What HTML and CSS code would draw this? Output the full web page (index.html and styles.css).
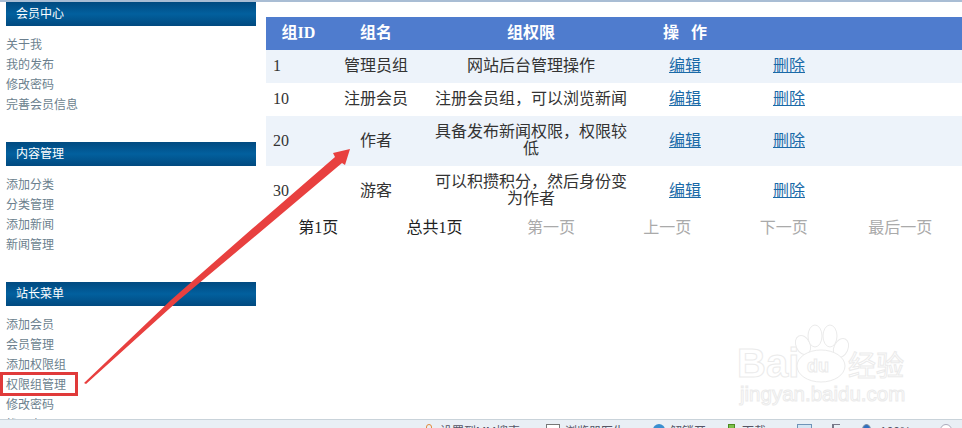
FILE: index.html
```html
<!DOCTYPE html>
<html lang="zh-CN">
	<head>
		<meta charset="UTF-8" />
		<meta name="viewport" content="width=device-width, initial-scale=1.0" />
		<title>权限组管理</title>
		<link rel="stylesheet" href="styles.css">
	</head>
	<body>
		<div class="layout">
			<aside class="sidebar">
				<section class="menu">
					<h3 class="menu-title">会员中心</h3>
					<ul class="menu-list">
						<li><a href="#">关于我</a></li>
						<li><a href="#">我的发布</a></li>
						<li><a href="#">修改密码</a></li>
						<li><a href="#">完善会员信息</a></li>
					</ul>
				</section>
				<section class="menu">
					<h3 class="menu-title">内容管理</h3>
					<ul class="menu-list">
						<li><a href="#">添加分类</a></li>
						<li><a href="#">分类管理</a></li>
						<li><a href="#">添加新闻</a></li>
						<li><a href="#">新闻管理</a></li>
					</ul>
				</section>
				<section class="menu">
					<h3 class="menu-title">站长菜单</h3>
					<ul class="menu-list">
						<li><a href="#">添加会员</a></li>
						<li><a href="#">会员管理</a></li>
						<li><a href="#">添加权限组</a></li>
						<li><a href="#">权限组管理</a></li>
						<li><a href="#">修改密码</a></li>
						<li><a href="#">找回密码</a></li>
					</ul>
				</section>
			</aside>

			<main class="content">
				<table class="group-table">
					<colgroup>
						<col class="col-id">
						<col class="col-name">
						<col class="col-perm">
						<col class="col-edit">
						<col class="col-del">
						<col>
					</colgroup>
					<thead>
						<tr>
							<th>组ID</th>
							<th>组名</th>
							<th>组权限</th>
							<th>操&nbsp;&nbsp;&nbsp;作</th>
							<th></th>
							<th></th>
						</tr>
					</thead>
					<tbody>
						<tr class="alt">
							<td class="id">1</td>
							<td>管理员组</td>
							<td>网站后台管理操作</td>
							<td><a href="#">编辑</a></td>
							<td><a href="#">删除</a></td>
							<td></td>
						</tr>
						<tr>
							<td class="id">10</td>
							<td>注册会员</td>
							<td>注册会员组，可以浏览新闻</td>
							<td><a href="#">编辑</a></td>
							<td><a href="#">删除</a></td>
							<td></td>
						</tr>
						<tr class="alt">
							<td class="id">20</td>
							<td>作者</td>
							<td>具备发布新闻权限，权限较低</td>
							<td><a href="#">编辑</a></td>
							<td><a href="#">删除</a></td>
							<td></td>
						</tr>
						<tr>
							<td class="id">30</td>
							<td>游客</td>
							<td>可以积攒积分，然后身份变为作者</td>
							<td><a href="#">编辑</a></td>
							<td><a href="#">删除</a></td>
							<td></td>
						</tr>
					</tbody>
				</table>
				<div class="pager">
					<span>第1页</span>
					<span>总共1页</span>
					<span class="off">第一页</span>
					<span class="off">上一页</span>
					<span class="off">下一页</span>
					<span class="off">最后一页</span>
				</div>
			</main>
		</div>

		<!-- 红框和箭头标注 -->
		<div class="mark-box"></div>
		<svg class="mark-arrow" width="962" height="428" viewBox="0 0 962 428">
			<polygon points="84,383 171,300 253,228 335,157 333,153 350,149 345,165 342,163 265,228 179,300 86,384" fill="#e8403f" />
		</svg>

		<!-- 水印 -->
		<svg class="watermark" width="242" height="110" viewBox="0 0 242 110">
			<g fill="#fff" stroke="#ebebeb" stroke-width="1">
				<text x="17" y="67" class="wm-bai">Bai</text>
				<ellipse cx="83" cy="35" rx="7" ry="10" transform="rotate(-25 83 35)" />
				<ellipse cx="95" cy="26" rx="7" ry="11" />
				<ellipse cx="110" cy="26" rx="7" ry="11" />
				<ellipse cx="121" cy="38" rx="7" ry="10" transform="rotate(25 121 38)" />
				<ellipse cx="101" cy="56" rx="24" ry="16" />
				<text x="87" y="62" class="wm-du">du</text>
				<text x="128" y="66" class="wm-jy">经验</text>
				<text x="20" y="91" class="wm-url">jingyan.baidu.com</text>
			</g>
		</svg>

		<footer class="statusbar">
			<span class="status-item s1"><i class="dot orange"></i>设置到MM搜索</span>
			<span class="status-item s2"><i class="dot case"></i>浏览器医生</span>
			<span class="status-item s3"><i class="dot globe"></i>解锁开</span>
			<span class="status-item s4"><i class="dot green"></i>下载</span>
			<span class="status-item s5"><i class="dot win"></i></span>
			<span class="status-item s6"><i class="dot sound"></i></span>
			<span class="status-item s7"><i class="dot blue"></i>100%</span>
			<span class="status-item"><i class="dot ring"></i></span>
		</footer>
	</body>
</html>
```

FILE: styles.css
```css
html,
body {
	height: 100%;
}
body {
	margin: 0;
	overflow: hidden;
	position: relative;
	background-color: #fff;
	font-family: 'Liberation Serif', 'Noto Sans CJK SC', serif;
	border-top: 2px solid #a9bdd4;
	box-sizing: border-box;
}
a {
	color: inherit;
}
.layout {
	display: flex;
}
.sidebar {
	width: 250px;
	margin-left: 6px;
	flex-shrink: 0;
	font-family: 'Liberation Sans', 'Noto Sans CJK SC', sans-serif;
}
.menu {
	margin-bottom: 27px;
}
.menu-title {
	margin: 0;
	height: 24px;
	padding-left: 10px;
	line-height: 24px;
	font-size: 12px;
	font-weight: normal;
	color: #fff;
	background: linear-gradient(#014a80, #02609e 50%, #014a80);
}
.menu-list {
	list-style: none;
	margin: 9px 0 0;
	padding: 0;
}
.menu-list li {
	height: 20px;
	line-height: 20px;
	font-size: 12px;
	color: #6b7f8e;
}
.menu-list a {
	text-decoration: none;
}
.content {
	flex: 1;
	margin-left: 10px;
	padding-top: 15px;
}
.group-table {
	width: 100%;
	border-collapse: collapse;
	table-layout: fixed;
	font-size: 16px;
	line-height: 17px;
	color: #333;
}
.col-id {
	width: 65px;
}
.col-name {
	width: 90px;
}
.col-perm {
	width: 220px;
}
.col-edit {
	width: 88px;
}
.col-del {
	width: 120px;
}
.group-table th {
	padding: 7px 0 9px;
	background-color: #4f7cce;
	color: #fff;
	font-weight: bold;
}
.group-table td {
	padding: 7px 10px 9px;
	text-align: center;
}
.group-table td.id {
	padding-left: 7px;
	text-align: left;
}
.group-table .alt td {
	background-color: #edf3fa;
}
.group-table a {
	color: #1a6aa8;
}
.pager {
	display: grid;
	grid-template-columns: repeat(6, 116.4px);
	margin-left: -6px;
	font-size: 16px;
	line-height: 24px;
	text-align: center;
	color: #222;
}
.pager .off {
	color: #aaa;
}
.mark-box {
	position: absolute;
	left: 0;
	top: 370px;
	width: 72px;
	height: 18px;
	border: 3px solid #e03a3a;
}
.mark-arrow {
	position: absolute;
	left: 0;
	top: -2px;
}
.watermark {
	position: absolute;
	left: 720px;
	top: 308px;
}
.wm-bai {
	font: bold 40px 'Liberation Sans', sans-serif;
}
.wm-du {
	font: bold 18px 'Liberation Sans', sans-serif;
}
.wm-jy {
	font: 28px 'Noto Sans CJK SC', sans-serif;
}
.wm-url {
	font: 20.5px 'Liberation Sans', sans-serif;
}
.statusbar {
	position: absolute;
	left: 0;
	right: 0;
	top: 417px;
	height: 9px;
	overflow: hidden;
	box-sizing: border-box;
	border-top: 1px solid #c9d3da;
	background-color: #e9eff5;
	display: flex;
	padding: 4px 0 0 424px;
	font: 12px/16px 'Liberation Sans', 'Noto Sans CJK SC', sans-serif;
	color: #556;
}
.status-item {
	display: flex;
	flex-shrink: 0;
}
.s1 {
	width: 122px;
}
.s2 {
	width: 107px;
}
.s3 {
	width: 75px;
}
.s4 {
	width: 69px;
}
.s5 {
	width: 35px;
}
.s6 {
	width: 30px;
}
.s7 {
	width: 78px;
}
.dot {
	display: block;
	width: 10px;
	height: 12px;
	box-sizing: border-box;
}
.orange {
	width: 6px;
	margin: 0 8px 0 2px;
	border: 1px solid #e08a3c;
	border-radius: 3px;
}
.case {
	width: 14px;
	margin-right: 5px;
	border: 1px solid #777;
	background: #fff;
}
.globe {
	width: 12px;
	margin-right: 5px;
	border-radius: 50%;
	background: #3a8fd0;
}
.green {
	width: 7px;
	margin-right: 7px;
	background: #7cc04a;
	border: 1px solid #4d8a22;
}
.win {
	width: 15px;
	border: 1px solid #6f93b8;
	background: #d5e5f3;
}
.sound {
	width: 8px;
	border-left: 2px solid #778;
	border-top: 1px solid #778;
}
.blue {
	width: 9px;
	margin-right: 9px;
	border-radius: 50%;
	border: 1px solid #7a8fa5;
	background: #2f6fc0;
}
.ring {
	width: 12px;
	border-radius: 50%;
	border: 1px solid #aab;
	background: #fff;
}
```
